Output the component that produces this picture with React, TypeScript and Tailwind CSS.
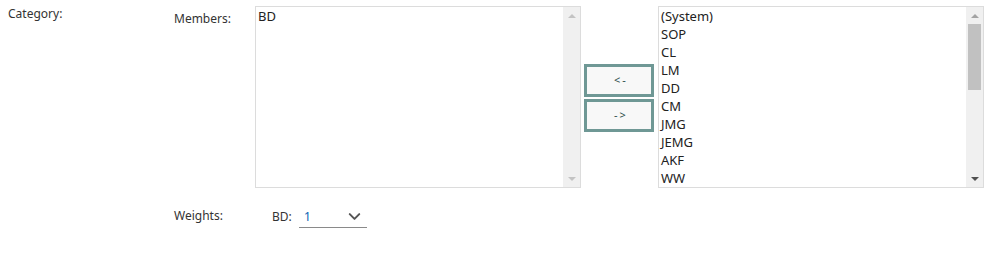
import { ChevronDown } from 'lucide-react';

const members = ['BD'];
const others = ['(System)', 'SOP', 'CL', 'LM', 'DD', 'CM', 'JMG', 'JEMG', 'AKF', 'WW'];

// 스크롤바 모양
function ScrollBar({ thumb }: { thumb: boolean }) {
  return (
    <div className="w-[17px] h-full bg-[#f0f0f0] flex flex-col items-center">
      <div className="h-[17px] flex items-center justify-center">
        <div className={`w-0 h-0 border-x-[4px] border-x-transparent border-b-[4px] ${thumb ? 'border-b-[#a3a3a3]' : 'border-b-[#c3c3c3]'}`} />
      </div>
      {thumb ? <div className="w-[13px] h-[66px] bg-[#c1c1c1]" /> : null}
      <div className="flex-1" />
      <div className="h-[17px] flex items-center justify-center">
        <div className={`w-0 h-0 border-x-[4px] border-x-transparent border-t-[4px] ${thumb ? 'border-t-[#505050]' : 'border-t-[#c3c3c3]'}`} />
      </div>
    </div>
  );
}

function ListBox({ items, thumb }: { items: string[]; thumb: boolean }) {
  return (
    <div className="w-[326px] h-[182px] border border-[#dcdcdc] flex bg-white">
      <div className="flex-1 pl-[2px] pt-0 text-[13px] leading-[18px] text-[#222]">
        {items.map((item) => (
          <div key={item}>{item}</div>
        ))}
      </div>
      <ScrollBar thumb={thumb} />
    </div>
  );
}

export default function App() {
  return (
    <div
      className="w-[1005px] h-[253px] bg-white text-[12px] text-[#333]"
      style={{ fontFamily: '"Noto Sans", "Open Sans", sans-serif' }}
    >
      <div className="flex pt-[6px]">
        {/* 카테고리 */}
        <div className="w-[174px] pl-[8px] leading-[16px]">Category:</div>
        <div className="flex flex-col">
          <div className="flex">
            <div className="w-[81px] pt-[5px] leading-[16px]">Members:</div>
            <ListBox items={members} thumb={false} />
            <div className="flex flex-col gap-[2px] ml-[3px] mr-[4px] mt-[58px]">
              <button className="w-[70px] h-[33px] pl-[4px] border-[3px] border-[#6f9895] bg-[#f8f8f8] text-[11px] tracking-[2px] text-[#2d4f4d]">
                &lt;-
              </button>
              <button className="w-[70px] h-[33px] pl-[4px] border-[3px] border-[#6f9895] bg-[#f8f8f8] text-[11px] tracking-[2px] text-[#2d4f4d]">
                -&gt;
              </button>
            </div>
            <ListBox items={others} thumb={true} />
          </div>

          {/* 가중치 */}
          <div className="flex items-start mt-[18px]">
            <div className="w-[98px] pt-[2px] leading-[16px]">Weights:</div>
            <div className="w-[27px] pt-[3px] leading-[16px]">BD:</div>
            <div className="w-[68px] h-[22px] border-b border-[#8a8a8a] flex items-center justify-between pl-[5px] pr-[3px]">
              <span className="text-[#0a64b4] text-[12px]">1</span>
              <ChevronDown className="w-[19px] h-[19px] text-[#555]" strokeWidth={2.5} />
            </div>
          </div>
        </div>
      </div>
    </div>
  );
}
